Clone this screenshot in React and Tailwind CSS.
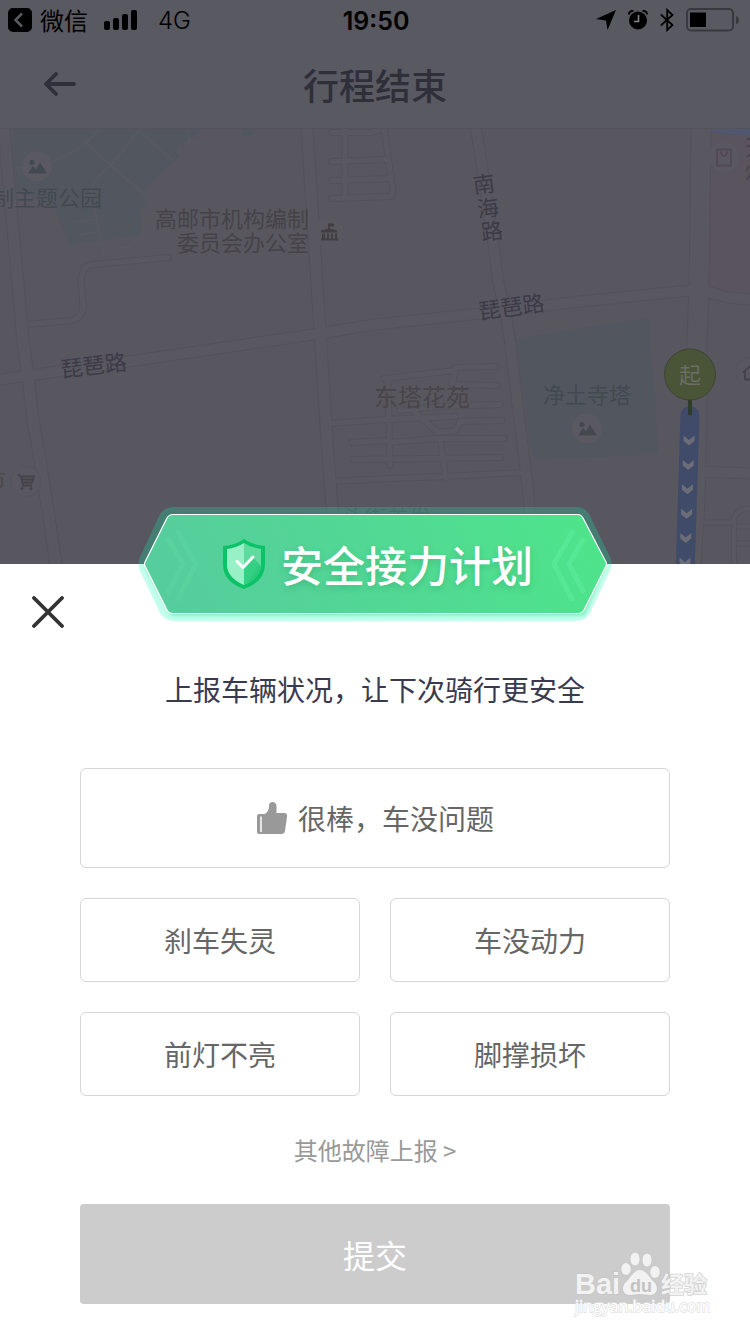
import React from "react";

const roads = [
  { d: "M332 132H372L384 128M332 161L386 159M332 180L388 178M332 198L391 196L393 190L384 128M345 130V198", w: 6 },
  { d: "M27 324L72 320Q84 316 83 304L81 282Q81 265 94 264L168 257", w: 6 },
  { d: "M330 423L385 419L455 416M352 442L384 440M353 459L500 457", w: 6 },
  { d: "M384 378L455 370L455 367L495 366M455 372L452 384L497 385M400 410L440 406L500 404M415 412L438 432L456 430L460 421L502 420M388 442L438 438L504 438M440 438L446 478M388 378L390 465", w: 6 },
  { d: "M330 481L390 478L445 476L520 472", w: 6 },
  { d: "M704 522H732M734 564V518Q737 508 750 508M738 526H750M738 543H750", w: 5 },
  { d: "M4 128L23 340L28 375L33 419L40 460L48 510L56 564", w: 12 },
  { d: "M307 128L320 330L327 440L333 520L337 564", w: 12 },
  { d: "M476 128L484 178L493 240L498 280L505 310L510 340L528 490L536 564", w: 11 },
  { d: "M701 128L699 290L697 340L697 420L695 500L691 564", w: 20 },
  { d: "M700 471L750 473", w: 11 },
  { d: "M0 379L28 375L115 363L320 333L375 324L480 313L580 301L700 289L727 297L750 299", w: 11 },
];

function PhotoPin({ x, y }) {
  return (
    <g transform={`translate(${x} ${y})`}>
      <circle r="15" fill="#5a5962" />
      <circle cx="-5" cy="-4" r="2.6" fill="#44484f" />
      <path d="M-9 7L-4 -0.5L-1 3L3 -4L10 7Z" fill="#44484f" />
    </g>
  );
}

function MapView() {
  return (
    <svg
      className="block h-full w-full"
      viewBox="0 128 750 436"
      preserveAspectRatio="xMidYMid slice"
      fontFamily="'Noto Sans CJK SC', sans-serif"
      fontSize="22"
      role="img"
      aria-label="行程地图"
    >
      <rect y="128" width="750" height="436" fill="#58575f" />
      <path d="M13 128H200V132L178 146L176 153L180 156L173 162L150 183L144 192L147 200L139 214L143 221L138 235L72 244L67 239L55 208L17 190L13 140Z" fill="#52575f" />
      <path d="M242 128H256Q255 136 248 136Q242 135 242 128Z" fill="#52575f" />
      <path d="M516 338L649 317L658 450L655 454L537 459L531 453Z" fill="#52575f" />
      <path d="M711 128H750V293L727 291L709 285Z" fill="#59545d" />
      <path d="M711 128H750V135L711 132Z" fill="#4f586f" />
      <path d="M100 128L86 142L111 165L142 192L146 201M139 130L111 165Q94 178 91 190L105 262M139 130L174 161M86 142Q72 154 52 161M75 222L95 219M80 234L98 231M16 168L25 166M188 128L190 142L200 142M105 249L132 246L138 236" fill="none" stroke="#585961" strokeWidth="1.4" />
      {roads.map((r, i) => (
        <path key={i} d={r.d} fill="none" stroke="#53525a" strokeWidth={r.w + 1} strokeLinecap="round" strokeLinejoin="round" />
      ))}
      {roads.map((r, i) => (
        <path key={i} d={r.d} fill="none" stroke="#595860" strokeWidth={r.w - 1} strokeLinecap="round" strokeLinejoin="round" />
      ))}

      <PhotoPin x="37" y="166" />
      <text x="102" y="205" textAnchor="end" fill="#434950">制主题公园</text>
      <g fill="#464348">
        <text x="309" y="226" textAnchor="end">高邮市机构编制</text>
        <text x="309" y="250" textAnchor="end">委员会办公室</text>
      </g>
      <circle cx="329" cy="232" r="15" fill="#595861" />
      <path d="M328 228V223H334V226H330V228L337 230V232H321V230ZM322 233H325V238H322ZM327 233H329V238H327ZM331 233H333V238H331ZM335 233H337V238H335ZM321 238H338V240H321Z" fill="#423e42" />

      <g fill="#3d3a47">
        <text transform="translate(474 193) rotate(-7)">南</text>
        <text transform="translate(478 217) rotate(-7)">海</text>
        <text transform="translate(482 240) rotate(-7)">路</text>
        <text transform="translate(480 319) rotate(-8)">琵琶路</text>
        <text transform="translate(62 377) rotate(-7)">琵琶路</text>
      </g>
      <text x="374" y="405" fontSize="24" fill="#494549">东塔花苑</text>
      <text x="543" y="402" fill="#434950">净土寺塔</text>
      <PhotoPin x="587" y="428" />
      <text x="343" y="525" fill="#4d4b51">头街美发</text>

      <text x="-16" y="487" fill="#4b484e">市</text>
      <circle cx="26" cy="481" r="15" fill="#595861" stroke="#55545c" />
      <path d="M18 474L21 476L23 485H32M22 476H34L32 482H22M22 479H33" fill="none" stroke="#464249" strokeWidth="1.8" />
      <circle cx="22" cy="488" r="1.5" fill="#464249" />
      <circle cx="31" cy="488" r="1.5" fill="#464249" />

      <circle cx="724" cy="157" r="15" fill="#595860" />
      <path d="M717 149H731V165H717ZM721 151V153Q724 158 727 153V151" fill="none" stroke="#554856" strokeWidth="1.8" />
      <text x="745" y="154" fill="#49424d">天</text>
      <text x="745" y="177" fill="#49424d">州</text>
      <circle cx="751" cy="372" r="15" fill="#595861" stroke="#55545c" />
      <path d="M743 372L751 365M745 371V379H754" fill="none" stroke="#464249" strokeWidth="1.8" />

      <path d="M690 415L685 574" stroke="#3f4b69" strokeWidth="19" strokeLinecap="round" />
      <g fill="#6c6d77">
        {[0, 1, 2, 3, 4, 5].map((n) => (
          <path key={n} transform={`translate(${689 - n * 0.8} ${440 + n * 24.4})`} d="M-5.5 -5L0 -0.5L5.5 -5V0.5L0 5L-5.5 0.5Z" />
        ))}
      </g>
      <path d="M690 398V413" stroke="#2f3b2b" strokeWidth="4" strokeLinecap="round" />
      <circle cx="690" cy="374" r="25.5" fill="#4a5436" stroke="#3e4432" />
      <text x="690" y="382" textAnchor="middle" fill="#6b6d66">起</text>
    </svg>
  );
}

function StatusBar() {
  return (
    <div className="grid h-10 grid-cols-3 items-center pl-2 pr-2.5 text-2xl text-black">
      <div className="flex items-center whitespace-nowrap leading-8">
        <svg width="24" height="24" viewBox="0 0 24 24" aria-hidden="true">
          <rect width="24" height="24" rx="5" />
          <path d="M14 5.5L7.5 12L14 18.5" fill="none" stroke="#595962" strokeWidth="2.5" />
        </svg>
        <span className="ml-2">微信</span>
        <svg className="ml-4" width="34" height="20" viewBox="0 0 34 20" aria-hidden="true">
          <rect y="11" width="6" height="9" rx="2" />
          <rect x="9" y="8" width="6" height="12" rx="2" />
          <rect x="18" y="4" width="6" height="16" rx="2" />
          <rect x="27" width="6" height="20" rx="2" />
        </svg>
        <span className="ml-5 pt-0.5 font-['Inter',sans-serif] font-light">4G</span>
      </div>
      <time className="pl-1 pt-0.5 text-center font-['Inter',sans-serif] text-[25px] font-semibold leading-8">19:50</time>
      <div className="flex items-center justify-end">
        <svg width="20" height="20" viewBox="0 0 20 20" aria-hidden="true">
          <path d="M20 0L11.5 20L10 10.5L0 9Z" />
        </svg>
        <svg className="ml-3" width="20" height="20" viewBox="0 0 20 20" aria-hidden="true">
          <circle cx="10" cy="10.5" r="9" />
          <path d="M0.5 4.5A5 5 0 0 1 5.5 0.8M19.5 4.5A5 5 0 0 0 14.5 0.8" fill="none" stroke="#000" strokeWidth="2" />
          <path d="M10.5 5V11.5H6" fill="none" stroke="#85858d" strokeWidth="1.6" />
        </svg>
        <svg className="ml-3" width="14" height="24" viewBox="0 0 14 24" aria-hidden="true">
          <path d="M0.8 6.5L12.5 17L7.2 22V2L12.5 7L0.8 17.5" fill="none" stroke="#000" strokeWidth="1.8" />
        </svg>
        <svg className="ml-3" width="54" height="24" viewBox="0 0 54 24" aria-hidden="true">
          <rect x="1" y="1" width="46" height="21.5" rx="4" fill="none" stroke="#39393d" strokeWidth="2" />
          <rect x="4" y="4.5" width="16" height="14.5" />
          <path d="M50 8Q53 9 53 12T50 16Z" fill="#39393d" />
        </svg>
      </div>
    </div>
  );
}

function Banner() {
  return (
    <div className="relative mx-auto -mt-[57px] flex h-[114px] w-[474px] items-center justify-center gap-4 pl-1.5">
      <svg className="absolute inset-0" width="474" height="114" viewBox="0 0 474 114" aria-hidden="true">
        <defs>
          <linearGradient id="plate" x1="0" y1="0.1" x2="1" y2="0">
            <stop offset="0" stopColor="#56cd9d" />
            <stop offset="1" stopColor="#4de58a" />
          </linearGradient>
          <filter id="glow" x="-5%" y="-10%" width="110%" height="130%">
            <feGaussianBlur stdDeviation="2" />
          </filter>
          <clipPath id="lower">
            <rect y="57" width="474" height="57" />
          </clipPath>
        </defs>
        <path d="M36 0H438Q447 0 451 7L472 50Q475 57 472 64L452 106Q447 114 438 114H36Q27 114 22 106L2 64Q-1 57 2 50L22 7Q27 0 36 0Z" fill="#0cfab4" fillOpacity="0.235" />
        <g clipPath="url(#lower)">
          <path d="M35 9H441L467 59L446 108H33L7 59Z" fill="#4fe3a0" filter="url(#glow)" opacity="0.8" />
        </g>
        <path d="M35 7.500H440Q443 7.500 445 11L468 55Q469 57 468 59L446 103Q444 106.500 440 106.500H35Q31 106.500 29 103L7 59Q6 57 7 55L29 11Q31 7.500 35 7.500Z" fill="url(#plate)" stroke="#fff" strokeWidth="1.2" />
        <g fill="none" strokeWidth="5" strokeLinecap="round" strokeLinejoin="round">
          <path d="M30 32L45 57L30 86M40 25L58 57L40 92" stroke="#5bd5a2" strokeOpacity="0.5" />
          <path d="M434 25L416 57L434 92M445 33L431 57L445 84" stroke="#5cec9b" strokeOpacity="0.6" />
        </g>
      </svg>
      <svg className="relative" width="42" height="50" viewBox="0 0 42 50" aria-hidden="true">
        <defs>
          <linearGradient id="fold" x1="0" y1="0" x2="1" y2="1">
            <stop offset="0.5" stopColor="#35d084" />
            <stop offset="1" stopColor="#0fb964" />
          </linearGradient>
        </defs>
        <path d="M21 0Q29 6 42 7V27Q41 43 21 50Q1 43 0 27V7Q13 6 21 0Z" fill="#0cc267" />
        <path d="M21 4Q29 9 38 10V27Q37 39 21 46Z" fill="#5edca0" />
        <path d="M21 4Q13 9 4 10V27Q5 39 21 46Z" fill="#98f0c6" />
        <path d="M31 19L38 27.500Q37 39 21 46V30Z" fill="url(#fold)" />
        <path d="M14 22.500L20 28.500L30 18" fill="none" stroke="#fff" strokeWidth="3" strokeLinecap="round" strokeLinejoin="round" />
      </svg>
      <h2 className="relative whitespace-nowrap text-[42px] font-medium leading-[48px] text-white [text-shadow:0_3px_6px_rgba(20,120,70,0.25)]">
        安全接力计划
      </h2>
    </div>
  );
}

function Watermark() {
  return (
    <svg className="pointer-events-none absolute bottom-4 right-10" width="136" height="68" viewBox="0 0 136 68" aria-hidden="true">
      <g fill="#f2f2f2" stroke="#c4c4c4" strokeOpacity="0.75" strokeWidth="1.5" paintOrder="stroke">
        <text x="1" y="44" fontFamily="'Liberation Sans', sans-serif" fontWeight="700" fontSize="29">Bai</text>
        <ellipse cx="52" cy="19" rx="4.8" ry="6" />
        <ellipse cx="61" cy="9" rx="4.6" ry="6.6" />
        <ellipse cx="73" cy="10" rx="4.6" ry="6.6" />
        <ellipse cx="81" cy="22" rx="4.8" ry="6" />
        <path d="M66 20C72 20 75 27 79 31C86 37 83 45 76 45C72 45 70 44 66 44C62 44 60 45 56 45C49 45 46 37 53 31C57 27 60 20 66 20Z" />
        <text x="87" y="43" fontFamily="'Noto Sans CJK SC', sans-serif" fontWeight="700" fontSize="23">经验</text>
      </g>
      <text x="56" y="42" fill="#c2c2c2" fontFamily="'Liberation Sans', sans-serif" fontWeight="700" fontSize="18">du</text>
      <text x="1" y="62" fill="#fff" stroke="#e0e0e0" strokeWidth="1.4" paintOrder="stroke" fontFamily="'Open Sans', sans-serif" fontSize="16">jingyan.baidu.com</text>
    </svg>
  );
}

const issues = ["刹车失灵", "车没动力", "前灯不亮", "脚撑损坏"];

export default function App() {
  return (
    <div className="relative min-h-screen bg-white font-['Noto_Sans_CJK_SC',sans-serif]">
      <div className="bg-[#595962]">
        <StatusBar />
        <header className="grid h-[88px] grid-cols-3 items-center px-11 text-[#2f2f39]">
          <button type="button" aria-label="返回" className="w-8">
            <svg width="32" height="24" viewBox="0 0 32 24" aria-hidden="true">
              <path d="M12 2L2 12L12 22M2 12H30" fill="none" stroke="currentColor" strokeWidth="3.8" strokeLinecap="round" strokeLinejoin="round" />
            </svg>
          </button>
          <h1 className="whitespace-nowrap text-center text-4xl font-medium">行程结束</h1>
        </header>
      </div>
      <div className="h-[436px] border-t border-[#54535c] bg-[#58575f]">
        <MapView />
      </div>

      <main className="relative flow-root pb-[30px] text-[28px] leading-10 text-[#666]">
        <Banner />
        <button type="button" aria-label="关闭" className="absolute left-8 top-8">
          <svg className="block" width="32" height="32" viewBox="0 0 32 32" aria-hidden="true">
            <path d="M2 2L30 30M30 2L2 30" stroke="#333" strokeWidth="3.8" strokeLinecap="round" />
          </svg>
        </button>
        <p className="mt-12 text-center text-[#3a3a4f]">上报车辆状况，让下次骑行更安全</p>

        <div className="mt-[59px] grid grid-cols-2 gap-[30px] px-20">
          <button type="button" className="col-span-2 flex h-[100px] items-center justify-center gap-2.5 rounded-md border border-[#d6d6d6]">
            <svg width="32" height="34" viewBox="0 0 32 34" aria-hidden="true">
              <path d="M3 13H9C12 11 13 8 13 5Q13 1 16.500 1Q20 1 20.500 5V12H29Q31.500 12.500 31 16L29 30Q28.500 33 25.500 33H3Q1 33 1 31V15Q1 13 3 13Z" fill="#999" />
              <path d="M5 16V30.500" stroke="#fff" strokeWidth="1.5" strokeLinecap="round" />
            </svg>
            很棒，车没问题
          </button>
          {issues.map((label) => (
            <button key={label} type="button" className="h-[84px] rounded-md border border-[#d6d6d6]">
              {label}
            </button>
          ))}
        </div>

        <div className="mt-9 text-center text-2xl leading-9 text-[#999]">
          <a href="#report">其他故障上报 &gt;</a>
        </div>
        <div className="mt-9 px-20">
          <button type="button" className="h-[100px] w-full rounded bg-[#ccc] text-[32px] text-white">提交</button>
        </div>
      </main>
      <Watermark />
    </div>
  );
}
